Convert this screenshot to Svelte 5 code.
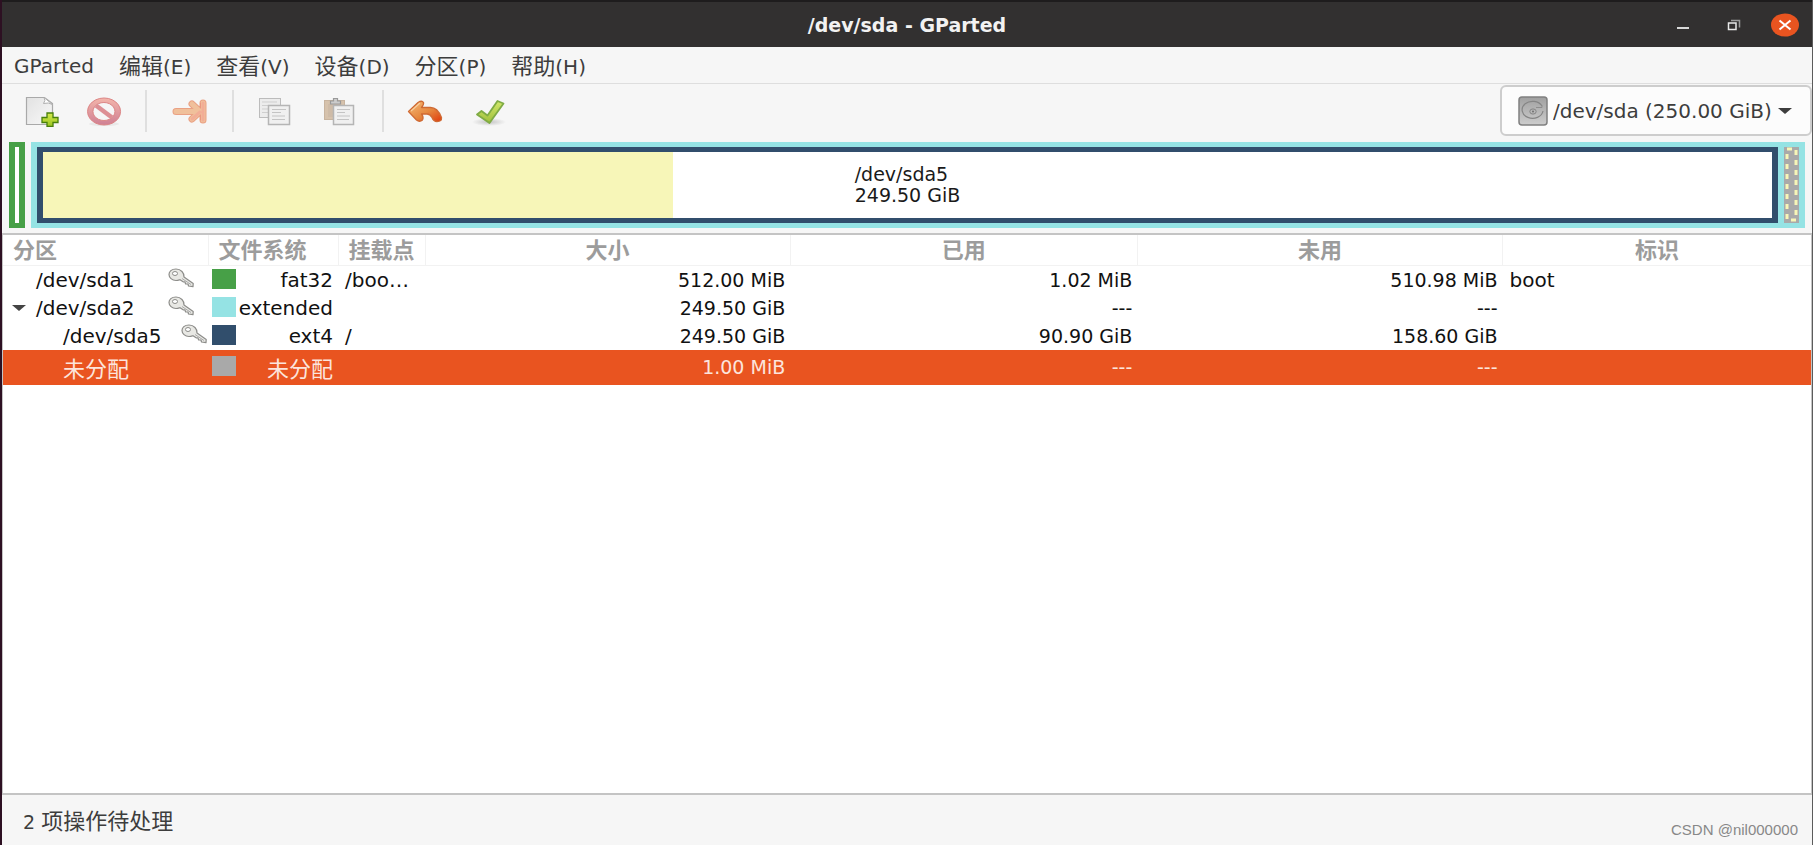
<script lang="ts">
  type Partition = {
    name: string;
    depth: number;
    open?: boolean;
    locked: boolean;
    fs: string;
    kind: string;
    mount: string;
    size: string;
    used: string;
    unused: string;
    flags: string;
    cjk?: boolean;
  };

  const menus = [
    { text: "编辑", key: "(E)" },
    { text: "查看", key: "(V)" },
    { text: "设备", key: "(D)" },
    { text: "分区", key: "(P)" },
    { text: "帮助", key: "(H)" },
  ];

  const partitions: Partition[] = [
    { name: "/dev/sda1", depth: 1, locked: true, fs: "fat32", kind: "fat32", mount: "/boo…", size: "512.00 MiB", used: "1.02 MiB", unused: "510.98 MiB", flags: "boot" },
    { name: "/dev/sda2", depth: 1, open: true, locked: true, fs: "extended", kind: "extended", mount: "", size: "249.50 GiB", used: "---", unused: "---", flags: "" },
    { name: "/dev/sda5", depth: 2, locked: true, fs: "ext4", kind: "ext4", mount: "/", size: "249.50 GiB", used: "90.90 GiB", unused: "158.60 GiB", flags: "" },
    { name: "未分配", depth: 2, locked: false, fs: "未分配", kind: "free", mount: "", size: "1.00 MiB", used: "---", unused: "---", flags: "", cjk: true },
  ];

  const usedPercent = (90.9 / 249.5) * 100;

  let selected = $state(3);
</script>

<div class="window">
  <header class="titlebar">
    <h1>/dev/sda - GParted</h1>
    <div class="controls">
      <button aria-label="Minimize">
        <svg width="14" height="24"><path d="M1 15h12" stroke="#d8d8d8" stroke-width="2" /></svg>
      </button>
      <button aria-label="Restore">
        <svg width="14" height="24" fill="none">
          <path d="M4 7.5h8.500v7" stroke="#9a9a9a" stroke-width="1.500" />
          <rect x="1.500" y="10" width="7.500" height="6.500" stroke="#e8e8e8" stroke-width="1.500" />
        </svg>
      </button>
      <button aria-label="Close">
        <svg width="28" height="24">
          <ellipse cx="14" cy="12" rx="14" ry="11.500" fill="#e95420" />
          <path d="M8.500 7.500l11 9M19.500 7.500l-11 9" stroke="#fff" stroke-width="2" />
        </svg>
      </button>
    </div>
  </header>

  <nav class="menubar">
    <button>GParted</button>
    {#each menus as menu}
      <button><span class="cjk">{menu.text}</span>{menu.key}</button>
    {/each}
  </nav>

  <div class="toolbar">
    <button class="tool" aria-label="New">
      <svg width="40" height="32">
        <defs>
          <linearGradient id="paper" x1="0" y1="0" x2="1" y2="1">
            <stop offset="0" stop-color="#e2e2e2" />
            <stop offset="1" stop-color="#f8f8f8" />
          </linearGradient>
          <linearGradient id="plus" x1="0" y1="0" x2="0" y2="1">
            <stop offset="0" stop-color="#d5ea4c" />
            <stop offset="1" stop-color="#9ac421" />
          </linearGradient>
        </defs>
        <path d="M6.500 2.500h18l8 6v21h-26z" fill="url(#paper)" stroke="#a9a9a9" stroke-width="1.200" />
        <path d="M24 2.500q2 3-.5 6 5-1.500 9 1z" fill="#fff" stroke="#b0b0b0" />
        <path d="M27 18h6v4.500h5v5h-5v4h-6v-4h-5v-5h5z" fill="url(#plus)" stroke="#487f0c" stroke-width="1.300" />
      </svg>
    </button>
    <button class="tool" aria-label="Delete">
      <svg width="40" height="32">
        <defs>
          <linearGradient id="stop" x1="0" y1="0" x2="0" y2="1">
            <stop offset="0" stop-color="#f3b5aa" />
            <stop offset="1" stop-color="#cf8094" />
          </linearGradient>
        </defs>
        <ellipse cx="21" cy="29" rx="15" ry="2" fill="#e9e9e9" />
        <path
          d="M21 3a16.500 13.500 0 1 0 .1 0zM21 7.500a11 9 0 1 1-.1 0z"
          fill="url(#stop)" fill-rule="evenodd" stroke="#dc8585" stroke-width="1"
        />
        <path d="M13 10.500l16 12" stroke="#dd8f94" stroke-width="4.500" />
      </svg>
    </button>
    <span class="separator"></span>
    <button class="tool" aria-label="Resize/Move">
      <svg width="40" height="32">
        <g stroke-linecap="round" stroke-linejoin="round" fill="none">
          <path d="M6 16.500h22M22 9l8 7.500-8 7.500M33 8v17" stroke="#eaa184" stroke-width="7" />
          <path d="M6 16.500h22M22 9l8 7.500-8 7.500M33 8v17" stroke="#f0c09b" stroke-width="5" />
          <path d="M33 8v17M30 17l-8 7" stroke="#f2ad96" stroke-width="3" />
          <path d="M30.500 8v5M30.500 20v5" stroke="#e99880" stroke-width="1" />
        </g>
      </svg>
    </button>
    <span class="separator"></span>
    <button class="tool" aria-label="Copy">
      <svg width="40" height="32">
        <rect x="2.500" y="3.500" width="21" height="19" fill="#ececec" stroke="#bcbcbc" />
        <path d="M5 7h15M5 10.500h8M5 14h9M5 17.500h6" stroke="#cfcfcf" />
        <rect x="11.500" y="10.500" width="21" height="19" fill="#f0f0f0" stroke="#b5b5b5" stroke-width="1.500" />
        <path d="M15 14.500h14M15 17.500h9M15 21h13M15 24.500h13" stroke="#c4c4c4" />
      </svg>
    </button>
    <button class="tool" aria-label="Paste">
      <svg width="40" height="32">
        <rect x="4.500" y="5.500" width="20" height="19" fill="#d6c2ac" stroke="#c8b49f" />
        <path d="M8 9h13v13H8z" fill="#cebba7" />
        <path d="M10.500 9V6h3V3.500h4V6h3v3z" fill="#ccc" stroke="#999" stroke-width="1.200" />
        <rect x="13.500" y="10.500" width="20" height="19" fill="#f0f0f0" stroke="#b5b5b5" stroke-width="1.500" />
        <path d="M17 14.500h13M17 17.500h8M17 21h13M17 24.500h12" stroke="#c4c4c4" />
      </svg>
    </button>
    <span class="separator"></span>
    <button class="tool" aria-label="Undo">
      <svg width="40" height="32">
        <defs>
          <linearGradient id="undo" x1="0" y1="0" x2="1" y2="1">
            <stop offset="0" stop-color="#f6bd7c" />
            <stop offset=".55" stop-color="#e6883f" />
            <stop offset="1" stop-color="#e03a0c" />
          </linearGradient>
        </defs>
        <path
          d="M1.500 16.500L11 7.500q4-2.500 5.500 0 .5 2-2 5h9q7 0 11 10 .5 4-4.500 4-3.500 0-5-4-2-3.500-5-3.500h-5.500q2.500 3.500 1 6-3 2.500-6 0z"
          fill="url(#undo)" stroke="#cf6a34" stroke-width="1.300" stroke-linejoin="round"
        />
        <path d="M4 16l9-8" stroke="#f8cf9d" stroke-width="1.200" />
      </svg>
    </button>
    <button class="tool" aria-label="Apply">
      <svg width="40" height="32">
        <defs>
          <linearGradient id="apply" x1="0" y1="0" x2="0" y2="1">
            <stop offset="0" stop-color="#d2e86a" />
            <stop offset="1" stop-color="#9fbf3c" />
          </linearGradient>
          <radialGradient id="shade">
            <stop offset="0" stop-color="#c4c4c4" />
            <stop offset="1" stop-color="#f6f6f6" />
          </radialGradient>
        </defs>
        <ellipse cx="19" cy="27" rx="17" ry="4" fill="url(#shade)" />
        <path
          d="M7 19.500l4.500-3.500 6 4.500L27.500 6l6 2.500L19.500 28z"
          fill="url(#apply)" stroke="#7fab45" stroke-width="1.800" stroke-linejoin="round"
        />
      </svg>
    </button>

    <div class="device">
      <svg class="disk" width="30" height="30">
        <defs>
          <linearGradient id="disk" x1="0" y1="0" x2="0" y2="1">
            <stop offset="0" stop-color="#a0a0a0" />
            <stop offset="1" stop-color="#cdcdcd" />
          </linearGradient>
        </defs>
        <rect x="1" y="1" width="28" height="28" rx="3" fill="url(#disk)" stroke="#808080" stroke-width="1.500" />
        <path d="M24 10a10.500 8.500 0 1 0 1 5" fill="none" stroke="#858585" stroke-width="1.200" />
        <path d="M18 11.500h6M24 9.500v2" fill="none" stroke="#8d8d8d" />
        <ellipse cx="15" cy="15.500" rx="3.200" ry="2.600" fill="none" stroke="#858585" />
        <circle cx="15" cy="15.500" r="1" fill="#6f6f6f" />
      </svg>
      <select aria-label="Device">
        <option>/dev/sda (250.00 GiB)</option>
      </select>
      <svg class="caret" width="16" height="8"><path d="M1 1h14L8 7z" fill="#3d3d3d" /></svg>
    </div>
  </div>

  <div class="diagram">
    <div class="bar fat32"><div class="space"></div></div>
    <div class="bar extended">
      <div class="bar ext4">
        <div class="space">
          <div class="used" style="width: {usedPercent}%"></div>
          <p>/dev/sda5<br />249.50 GiB</p>
        </div>
      </div>
      <svg width="15" height="76">
        <rect width="15" height="76" fill="#a9a9a9" />
        <rect x="3" y="2" width="9" height="71" fill="none" stroke="#f7f6b8" stroke-width="3" stroke-dasharray="5 5" />
      </svg>
    </div>
  </div>

  <main>
    <table>
      <colgroup>
        <col class="col-name" />
        <col class="col-fs" />
        <col class="col-mount" />
        <col class="col-size" />
        <col class="col-used" />
        <col class="col-size" />
        <col />
      </colgroup>
      <thead>
        <tr>
          <th class="left">分区</th>
          <th class="left">文件系统</th>
          <th class="left">挂载点</th>
          <th>大小</th>
          <th>已用</th>
          <th>未用</th>
          <th>标识</th>
        </tr>
      </thead>
      <tbody>
        {#each partitions as part, i}
          <tr class:selected={selected === i} class:tall={part.cjk} onclick={() => (selected = i)}>
            <td>
              <div class="name" class:nested={part.depth === 2}>
                <span class="expander">
                  {#if part.open}
                    <svg width="14" height="8"><path d="M0 1h14L7 7z" fill="#444" /></svg>
                  {/if}
                </span>
                <span class="label" class:cjk={part.cjk}>{part.name}</span>
                {#if part.locked}
                  <svg class="key" width="26" height="20">
                    <path
                      d="M8 1C3.500 1 1 3.500 1 6.500S4 12.500 8 12.500c2 0 3-.5 4-.8l3.500 2.300 1.500-.2.500 2 2.500.2.500 2 4.500.6.200-3L16 9c.3-4-3-8-8-8z"
                      fill="#e8e8e4" stroke="#8d8d8a" stroke-width="1.200" stroke-linejoin="round"
                    />
                    <ellipse cx="7" cy="5.500" rx="2.500" ry="2" fill="#fff" stroke="#8d8d8a" />
                    <path d="M14 10.500l9 6" stroke="#aaa" />
                  </svg>
                {/if}
              </div>
            </td>
            <td>
              <div class="fs">
                <span class="swatch {part.kind}"></span>
                <span class:cjk={part.cjk}>{part.fs}</span>
              </div>
            </td>
            <td class="text">{part.mount}</td>
            <td class="number">{part.size}</td>
            <td class="number">{part.used}</td>
            <td class="number">{part.unused}</td>
            <td class="text">{part.flags}</td>
          </tr>
        {/each}
      </tbody>
    </table>
  </main>

  <footer>
    <span>2 <span class="cjk">项操作待处理</span></span>
    <small>CSDN @nil000000</small>
  </footer>
</div>

<style>
  :global(body) {
    margin: 0;
  }

  .window {
    box-sizing: border-box;
    display: flex;
    flex-direction: column;
    min-height: 100vh;
    border-left: 2px solid #2d1022;
    border-right: 1px solid #5c5c5c;
    background: #f6f6f6;
    color: #3d3d3d;
    font-family: "DejaVu Sans", "Noto Sans CJK SC", sans-serif;
    font-size: 19px;
    line-height: 24px;
  }

  button,
  select {
    margin: 0;
    padding: 0;
    border: 0;
    background: none;
    color: inherit;
    font: inherit;
  }

  svg {
    display: block;
    flex: none;
  }

  .cjk {
    font-family: "Noto Sans CJK SC", sans-serif;
    font-size: 22px;
  }

  .titlebar {
    box-sizing: border-box;
    display: grid;
    grid-template-columns: 1fr auto 1fr;
    align-items: center;
    height: 47px;
    padding-right: 13px;
    padding-left: 13px;
    border-top: 2px solid #1e1c1d;
    background: #323030;
    color: #f2f2f2;
  }

  h1 {
    grid-column: 2;
    margin: 0;
    font-size: 19px;
    font-weight: bold;
  }

  .controls {
    display: flex;
    align-items: center;
    justify-content: flex-end;
    gap: 23px;
  }

  .controls button {
    display: flex;
    justify-content: center;
    width: 28px;
  }

  .menubar {
    box-sizing: border-box;
    display: flex;
    align-items: center;
    gap: 1px;
    height: 37px;
    border-bottom: 1px solid #dedede;
    font-size: 20px;
  }

  .menubar button {
    padding: 1px 12px 0;
    white-space: nowrap;
  }

  .toolbar {
    box-sizing: border-box;
    display: flex;
    align-items: center;
    height: 54px;
    padding-bottom: 1px;
    padding-left: 6px;
  }

  .tool {
    display: flex;
    justify-content: center;
    width: 63px;
  }

  .separator {
    width: 2px;
    height: 42px;
    margin: 0 11px;
    background: #dfdfdf;
  }

  .device {
    box-sizing: border-box;
    display: flex;
    align-items: center;
    height: 51px;
    margin-left: auto;
    padding: 0 17px 0 16px;
    border: 2px solid #cdcdcd;
    border-radius: 6px;
    background: #fcfcfc;
    font-size: 20px;
  }

  .device select {
    appearance: none;
    width: 229px;
    padding-left: 5px;
    outline: none;
  }

  .diagram {
    display: flex;
    gap: 6px;
    height: 86px;
    margin: 4px 7px 5px;
  }

  .bar {
    box-sizing: border-box;
    display: flex;
    padding: 5px 6px;
  }

  .bar.extended {
    flex: 1;
    gap: 6px;
  }

  .bar.fat32 {
    width: 16px;
  }

  .bar.ext4 {
    flex: 1;
  }

  .space {
    display: flex;
    flex: 1;
    align-items: center;
    justify-content: center;
    position: relative;
    background: #fff;
  }

  .used {
    position: absolute;
    top: 0;
    bottom: 0;
    left: 0;
    background: #f7f6b8;
  }

  .space p {
    position: relative;
    margin: 0;
    color: #1a1a1a;
    line-height: 21px;
  }

  .fat32 {
    background: #47a047;
  }

  .extended {
    background: #95e3e4;
  }

  .ext4 {
    background: #314e6c;
  }

  .free {
    background: #a9a9a9;
  }

  main {
    flex: 1;
    border: 1px solid #c4c4c4;
    border-width: 2px 1px;
    background: #fff;
  }

  table {
    width: 100%;
    border-collapse: collapse;
    table-layout: fixed;
  }

  .col-name {
    width: 205px;
  }

  .col-fs {
    width: 130px;
  }

  .col-mount {
    width: 87px;
  }

  .col-size {
    width: 20.2%;
  }

  .col-used {
    width: 19.2%;
  }

  th {
    box-sizing: border-box;
    height: 30px;
    padding: 0 0 4px;
    border-right: 1px solid #f2f2f2;
    border-bottom: 1px solid #f2f2f2;
    color: #9c9c9c;
    font-family: "Noto Sans CJK SC", sans-serif;
    font-size: 22px;
    font-weight: bold;
    line-height: 24px;
  }

  th:last-child {
    border-right: 0;
  }

  th.left {
    padding-left: 10px;
    text-align: left;
  }

  td {
    height: 28px;
    padding: 0;
    color: #111;
    font-size: 20px;
    white-space: nowrap;
  }

  .tall td {
    height: 35px;
  }

  .selected td {
    background: #e95420;
    color: #fce4dc;
  }

  .name {
    display: flex;
    align-items: center;
    padding-right: 14px;
    padding-left: 9px;
  }

  .name.nested {
    padding-right: 1px;
    padding-left: 36px;
  }

  .expander {
    width: 24px;
  }

  .label {
    flex: 1;
  }

  .key {
    margin-bottom: 3px;
  }

  .fs {
    display: flex;
    align-items: center;
    justify-content: space-between;
    padding: 0 5px 0 4px;
  }

  .swatch {
    width: 24px;
    height: 20px;
    margin-bottom: 2px;
  }

  td.text {
    padding-left: 7px;
  }

  td.number {
    padding-right: 5px;
    font-size: 19px;
    text-align: right;
  }

  footer {
    display: flex;
    align-items: center;
    justify-content: space-between;
    height: 50px;
    padding: 0 14px 0 21px;
  }

  small {
    padding-top: 20px;
    color: #888;
    font-family: "Liberation Sans", sans-serif;
    font-size: 15px;
  }
</style>
